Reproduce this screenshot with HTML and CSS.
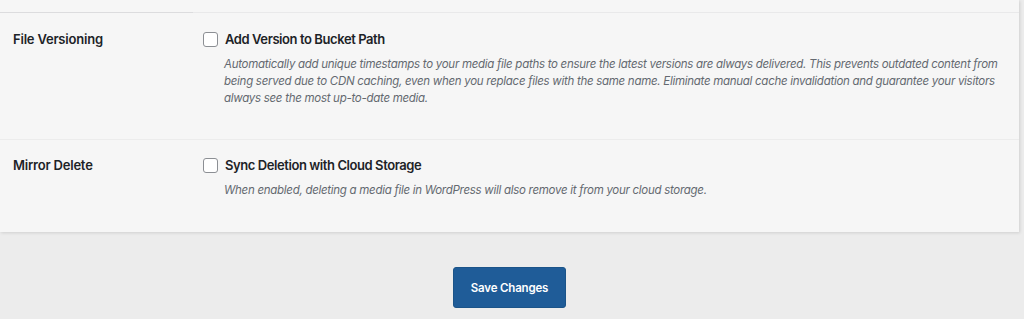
FILE: index.html
```html
<!DOCTYPE html>
<html>
<head>
<meta charset="utf-8">
<link rel="stylesheet" href="styles.css">
</head>
<body>
<div class="page">
  <div class="panel">
    <div class="top-sep"></div>
    <div class="row row-first">
      <div class="label">File Versioning</div>
      <div class="field">
        <label class="check"><span class="box"></span><span class="check-text">Add Version to Bucket Path</span></label>
        <p class="desc">Automatically add unique timestamps to your media file paths to ensure the latest versions are always delivered. This prevents outdated content from being served due to CDN caching, even when you replace files with the same name. Eliminate manual cache invalidation and guarantee your visitors always see the most up-to-date media.</p>
      </div>
    </div>
    <div class="row row-second">
      <div class="label">Mirror Delete</div>
      <div class="field">
        <label class="check"><span class="box"></span><span class="check-text">Sync Deletion with Cloud Storage</span></label>
        <p class="desc">When enabled, deleting a media file in WordPress will also remove it from your cloud storage.</p>
      </div>
    </div>
  </div>
  <div class="actions">
    <button class="save">Save Changes</button>
  </div>
</div>
</body>
</html>
```

FILE: styles.css
```css
html, body {
  margin: 0;
  padding: 0;
  background: #ececec;
  font-family: "Inter", "Liberation Sans", Arial, sans-serif;
  color: #1d2327;
}
.page {
  width: 1024px;
  height: 319px;
  overflow: hidden;
}
.panel {
  width: 1019px;
  background: #f6f6f6;
  box-shadow: 1px 1px 3px rgba(0,0,0,0.12);
  padding-top: 12px;
  box-sizing: border-box;
  height: 232px;
}
.top-sep {
  height: 1px;
  background: linear-gradient(to right, #dcdcde 0, #dcdcde 193px, #e9e9ea 193px);
}
.row {
  display: flex;
}
.row-first {
  height: 127px;
  border-bottom: 1px solid #ececec;
  padding-top: 19px;
  box-sizing: border-box;
}
.row-second {
  padding-top: 18px;
}
.label {
  width: 190px;
  padding-left: 13px;
  font-size: 13px;
  font-weight: 600;
  line-height: 14px;
  letter-spacing: -0.2px;
  flex: none;
}
.field {
  flex: 1;
}
.check {
  display: flex;
  align-items: center;
  height: 14px;
}
.box {
  width: 13px;
  height: 13px;
  border: 1px solid #8c8f94;
  border-radius: 3px;
  background: #fff;
  margin-right: 7px;
  flex: none;
}
.check-text {
  font-size: 13px;
  font-weight: 600;
  letter-spacing: -0.42px;
}
.desc {
  margin: 10px 0 0 21px;
  font-size: 11.5px;
  font-style: italic;
  line-height: 17px;
  letter-spacing: -0.28px;
  color: #646970;
  padding-right: 8px;
}
.actions {
  display: flex;
  justify-content: center;
  width: 1019px;
  padding-top: 35px;
}
.save {
  width: 113px;
  height: 41px;
  background: #1f5c98;
  border: 1px solid #1b5489;
  border-radius: 3px;
  color: #fff;
  font-family: "Inter", "Liberation Sans", Arial, sans-serif;
  font-size: 11.5px;
  font-weight: 600;
  letter-spacing: -0.17px;
  padding: 0;
}
```
